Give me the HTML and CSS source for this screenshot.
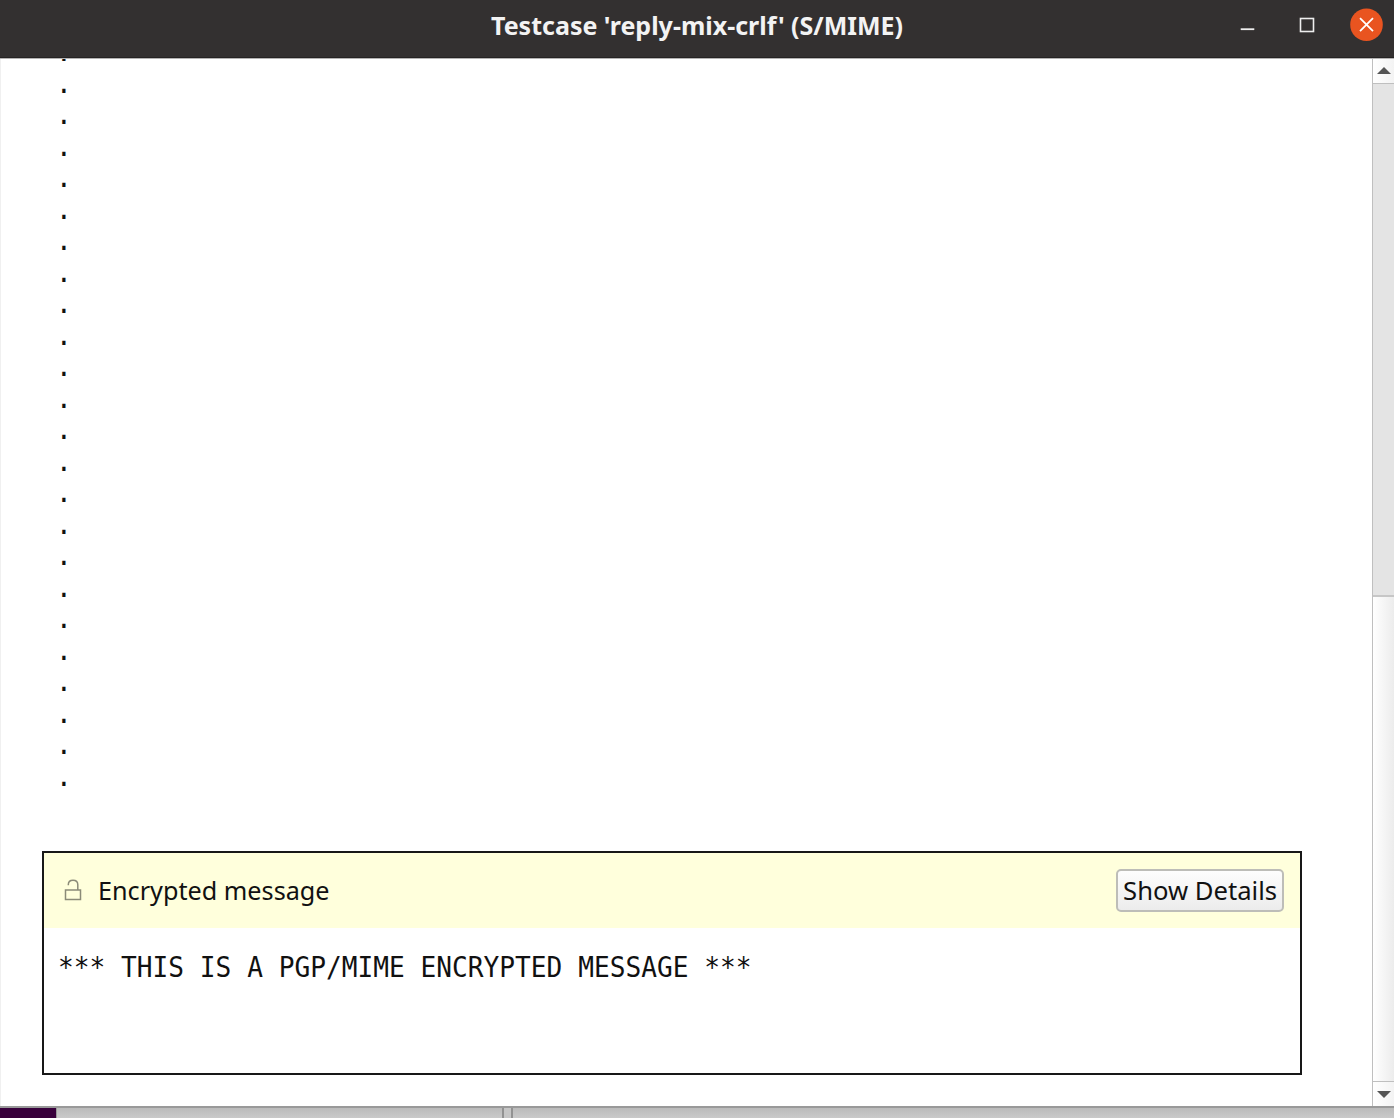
FILE: index.html
```html
<!DOCTYPE html>
<html lang="en">
<head>
<meta charset="utf-8">
<title>Testcase 'reply-mix-crlf' (S/MIME)</title>
<link rel="stylesheet" href="styles.css">
</head>
<body>
<header class="titlebar">
  <h1 class="title"><span>Testcase 'reply-mix-crlf' (S/MIME)</span></h1>
  <svg class="controls" width="154" height="50" viewBox="0 0 154 50" fill="none">
    <path d="M.7 29.2H14.3" stroke="#eee" stroke-width="1.8"/>
    <rect x="60.5" y="18.5" width="13" height="13" stroke="#eee" stroke-width="1.6"/>
    <circle cx="126.5" cy="24.7" r="16.3" fill="#e95420"/>
    <path d="M120 18.2l13 13m0-13l-13 13" stroke="#fff" stroke-width="1.8"/>
  </svg>
</header>
<main class="window">
  <section class="content">
<pre class="plain dots">.
.
.
.
.
.
.
.
.
.
.
.
.
.
.
.
.
.
.
.
.
.
.
.</pre>
    <article class="encrypted">
      <div class="banner">
        <svg class="lock" width="18" height="22" viewBox="0 0 18 22" fill="none" stroke="#8b8b78" stroke-width="1.5">
          <rect x="1.5" y="11" width="15" height="9.5"/>
          <path d="M4.3 6.2V5.7C4.3 3 6 1.2 9 1.2s4.8 1.8 4.8 4.5V11"/>
        </svg>
        <span class="label"><span>Encrypted message</span></span>
        <button class="details"><span>Show Details</span></button>
      </div>
      <pre class="plain body">*** THIS IS A PGP/MIME ENCRYPTED MESSAGE ***</pre>
    </article>
  </section>
  <aside class="scrollbar">
    <div class="arrow"><svg width="14" height="7" viewBox="0 0 14 7"><path d="M0 7L7 0l7 7z" fill="#555"/></svg></div>
    <div class="thumb"></div>
    <div class="track"></div>
    <div class="arrow down"><svg width="14" height="7" viewBox="0 0 14 7"><path d="M0 0h14L7 7z" fill="#555"/></svg></div>
  </aside>
</main>
<footer class="desktop">
  <div class="wallpaper"></div>
  <div class="pane"></div>
  <div class="splitter"></div>
  <div class="pane rest"></div>
</footer>
</body>
</html>
```
FILE: styles.css
```css
* { box-sizing: border-box; }
body {
  margin: 0;
  width: 1394px;
  height: 1118px;
  overflow: hidden;
  display: flex;
  flex-direction: column;
  background: #fff;
  color: #111;
  font-family: "Noto Sans", "Open Sans", sans-serif;
}
.titlebar {
  height: 59px;
  flex: none;
  display: grid;
  grid-template-columns: 1fr 412px 1fr;
  background: #333030;
  border-bottom: 1px solid #b5b3b3;
  box-shadow: inset 0 -1px #252323;
}
.title {
  grid-column: 2;
  margin: 0;
  font-size: 25px;
  font-weight: 700;
  line-height: 50px;
  color: #f3f3f3;
  white-space: nowrap;
}
.title span { display: inline-block; transform-origin: 0 50%; transform: scaleX(1); }
.controls { justify-self: end; }
.window { flex: 1; min-height: 0; display: flex; }
.content {
  flex: 1;
  overflow: hidden;
  padding: 0 70px 0 41px;
  border-left: 1px solid #f0f0f0;
}
.plain {
  margin: 0;
  width: max-content;
  font: 28px/31.5px "DejaVu Sans Mono", monospace;
  transform-origin: 0 0;
  transform: scaleX(.935);
}
.dots { margin: -23px 0 0 14px; height: 815px; }
.encrypted { height: 224px; border: 2px solid #181818; }
.banner {
  height: 75px;
  display: flex;
  align-items: center;
  padding: 0 16px 2px 20px;
  background: #ffffdc;
}
.label, .details {
  font-size: 25px;
  line-height: 34px;
  white-space: nowrap;
}
.label { margin-left: 16px; }
.label span { display: inline-block; transform-origin: 0 50%; transform: scaleX(1.008); }
.details {
  margin: 2px 0 0 auto;
  width: 168px;
  height: 43px;
  padding: 0 0 2px;
  font-family: inherit;
  color: #111;
  border: 2px solid #bdbdb8;
  border-radius: 5px;
  background: linear-gradient(#fdfdfd, #ececec);
}
.details span { display: inline-block; transform: scaleX(1.025); }
.body { margin: 24px 0 0 14px; }
.scrollbar {
  width: 22px;
  display: flex;
  flex-direction: column;
  border-left: 1px solid #bfbfbf;
  background: linear-gradient(90deg, #fff, #ececec);
}
.arrow {
  height: 25px;
  flex: none;
  display: flex;
  align-items: center;
  padding: 0 0 2px 4px;
  border-bottom: 1px solid #bfbfbf;
  background: linear-gradient(90deg, #fff, #f3f3f3);
}
.arrow.down { padding-bottom: 0; border: 0; border-top: 1px solid #bfbfbf; }
.thumb { height: 513px; background: #e4e4e4; border-bottom: 2px solid #c6c6c6; }
.track { flex: 1; }
.desktop {
  height: 12px;
  flex: none;
  display: flex;
  border-top: 2px solid #999;
  background: #c6c6c6;
}
.wallpaper { width: 56px; background: #38003b; }
.pane { width: 446px; border-left: 1px solid #999; background: linear-gradient(#bbb, #cacaca); }
.splitter { width: 11px; border: solid #929292; border-width: 0 2px; }
.rest { flex: 1; border: 0; }
```
